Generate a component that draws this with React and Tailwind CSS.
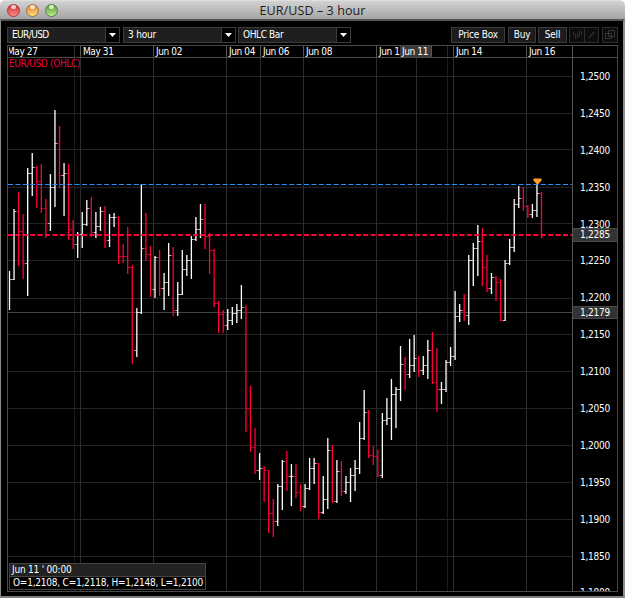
import React from 'react';

// [high, low, close] of every 3 hour bar, r = falling bar
const bars = [
  [271, 310, 279], [209, 280, 211], [192, 266, 231, 'r'], [214, 279, 263, 'r'], [168, 296, 173],
  [153, 196, 167], [166, 208, 181, 'r'], [164, 213, 208, 'r'], [199, 238, 223, 'r'], [174, 231, 187],
  [110, 207, 143], [126, 188, 175, 'r'], [163, 216, 173], [164, 240, 229, 'r'], [220, 249, 244, 'r'],
  [232, 258, 234], [212, 248, 224], [200, 226, 208], [197, 237, 232, 'r'], [212, 238, 226],
  [207, 231, 211], [206, 248, 240, 'r'], [214, 247, 217], [213, 227, 217], [216, 264, 256, 'r'],
  [244, 263, 256, 'r'], [227, 274, 267, 'r'], [265, 364, 350, 'r'], [308, 357, 312], [184, 314, 248],
  [213, 261, 254, 'r'], [246, 297, 289, 'r'], [256, 298, 257], [250, 296, 288, 'r'], [273, 310, 282],
  [243, 296, 255], [247, 316, 310, 'r'], [282, 316, 294], [250, 295, 269], [255, 276, 260],
  [236, 279, 239], [217, 241, 229], [204, 238, 219], [204, 249, 236, 'r'], [233, 274, 250, 'r'],
  [249, 307, 303, 'r'], [301, 333, 314, 'r'], [310, 333, 325, 'r'], [309, 330, 320], [307, 325, 313],
  [304, 323, 310], [285, 319, 307], [305, 432, 408, 'r'], [386, 452, 447, 'r'], [428, 474, 470, 'r'],
  [453, 480, 468], [466, 502, 470, 'r'], [470, 533, 513, 'r'], [499, 537, 521, 'r'], [484, 526, 486],
  [460, 510, 461], [451, 491, 476, 'r'], [464, 506, 476], [464, 498, 492, 'r'], [484, 511, 506, 'r'],
  [484, 508, 488], [458, 490, 468], [458, 484, 463], [463, 519, 512, 'r'], [476, 514, 499],
  [438, 509, 450], [445, 503, 501, 'r'], [460, 503, 471], [461, 496, 491, 'r'], [476, 494, 482],
  [468, 502, 475], [460, 491, 468], [422, 474, 438], [390, 440, 412], [410, 458, 455, 'r'],
  [446, 465, 456, 'r'], [450, 477, 475, 'r'], [413, 478, 420], [398, 425, 418], [379, 440, 394],
  [387, 428, 389], [346, 401, 364], [357, 390, 374, 'r'], [339, 378, 365], [335, 372, 358],
  [356, 377, 370, 'r'], [356, 375, 365], [340, 379, 350], [332, 384, 382, 'r'], [348, 412, 389, 'r'],
  [382, 404, 389], [360, 392, 362], [347, 366, 356], [291, 360, 316], [304, 322, 310],
  [294, 321, 315, 'r'], [255, 325, 260], [243, 286, 248], [225, 276, 241], [228, 286, 267, 'r'],
  [255, 292, 288, 'r'], [273, 294, 277], [276, 301, 282, 'r'], [279, 321, 320, 'r'], [260, 321, 263],
  [239, 265, 247], [199, 252, 204], [186, 208, 198], [187, 211, 206, 'r'], [205, 218, 214, 'r'],
  [204, 218, 210], [184, 217, 193], [192, 238, 237, 'r'],
];

const barX = (i) => 9.5 + i * 4.547;

const prices = [
  '1,2500', '1,2450', '1,2400', '1,2350', '1,2300', '1,2250', '1,2200', '1,2150',
  '1,2100', '1,2050', '1,2000', '1,1950', '1,1900', '1,1850', '1,1800',
];

const gridY = [76, 113, 149, 187, 223, 260, 298, 334, 371, 408, 445, 482, 519, 556];
const gridX = [80, 153, 226, 260, 303, 376, 416, 453, 526];

const dates = [
  { label: 'May 27', cell: 'w-[66px] border-transparent', text: '-ml-1' },
  { label: '', cell: 'w-[6px] border-[#2a2a2a]', text: '' },
  { label: 'May 31', cell: 'w-[73px] border-[#555]', text: '' },
  { label: 'Jun 02', cell: 'w-[73px] border-[#555]', text: '' },
  { label: 'Jun 04', cell: 'w-[34px] border-[#555]', text: '' },
  { label: 'Jun 06', cell: 'w-[43px] border-[#555]', text: '' },
  { label: 'Jun 08', cell: 'w-[73px] border-[#555]', text: '' },
  { label: 'Jun 1', cell: 'w-[71px] border-[#555]', text: '' },
  { label: '', cell: 'w-[6px] border-[#2a2a2a]', text: '' },
  { label: 'Jun 14', cell: 'w-[73px] border-[#555]', text: '' },
  { label: 'Jun 16', cell: 'w-[46px] border-[#555]', text: '' },
  { label: '', cell: 'w-[45px] border-[#555]', text: '' },
];

const Dropdown = ({ label, className }) => (
  <div className={`flex h-4 border border-[#3c3c3c] bg-[#1f1f1f] ${className}`}>
    <span className="flex-1 pl-1 leading-[14px]">{label}</span>
    <span className="w-[14px] border-l border-[#3c3c3c] bg-black flex items-center justify-center">
      <svg width="7" height="4" viewBox="0 0 7 4"><path d="M0 0h7L3.5 4z" fill="#fff" /></svg>
    </span>
  </div>
);

const Button = ({ children, className }) => (
  <button className={`h-4 border border-[#3c3c3c] bg-[#1c1c1c] leading-[14px] text-center whitespace-nowrap tracking-[-0.2px] ${className}`}>
    {children}
  </button>
);

const Light = ({ className }) => (
  <span className={`relative w-[13px] h-[13px] rounded-full border ${className}`}>
    <span className="absolute left-[3px] top-0 w-[5px] h-[4px] rounded-full bg-white/75" />
  </span>
);

const TitleBar = () => (
  <header className="relative h-[19px] shrink-0 flex items-center rounded-t-[5px] bg-linear-to-b from-[#d2d2d2] to-[#a5a5a5] border-t border-[#dedede] pl-[7px]">
    <div className="flex gap-[6px]">
      <Light className="border-[#a33a3c] bg-linear-to-b from-[#c9252b] to-[#ff8a86]" />
      <Light className="border-[#a9703a] bg-linear-to-b from-[#d97f20] to-[#ffdd80]" />
      <Light className="border-[#56803f] bg-linear-to-b from-[#559535] to-[#bdf090]" />
    </div>
    <h1 className="absolute inset-x-0 top-0 text-center text-[12.5px] leading-[19px] tracking-[0.1px] [font-stretch:normal] text-[#1c1c1c] font-['Open_Sans',sans-serif]">EUR/USD – 3 hour</h1>
  </header>
);

const Toolbar = () => (
  <div className="flex h-[18px] pl-[6px] pr-[5px] text-white">
    <Dropdown label="EUR/USD" className="w-[113px] tracking-[-0.6px]" />
    <Dropdown label="3 hour" className="w-[113px] ml-[3px] tracking-[-0.2px]" />
    <Dropdown label="OHLC Bar" className="w-[113px] ml-[2px]" />
    <div className="flex ml-auto">
      <Button className="w-[54px]">Price Box</Button>
      <Button className="w-[28px] ml-[3px]">Buy</Button>
      <Button className="w-[29px] ml-[2px]">Sell</Button>
      <div className="flex w-[30px] h-4 ml-[2px] border border-[#2f2f2f] bg-[#0d0d0d]">
        <svg width="14" height="14" viewBox="0 0 14 14" stroke="#2d2d2d" fill="none">
          <path d="M3.5 4v4M5.5 5v6M7.5 5v5M9.5 3v6M11.5 3v4" />
        </svg>
        <svg width="14" height="14" viewBox="0 0 14 14" stroke="#303030" fill="none" className="border-l border-[#2f2f2f]">
          <path d="M4 10l6-6" strokeWidth="1.5" />
        </svg>
      </div>
      <div className="w-4 h-4 ml-[3px] border border-[#2f2f2f] bg-[#0d0d0d]">
        <svg width="14" height="14" viewBox="0 0 14 14" stroke="#353535" fill="#0d0d0d">
          <path d="M5.5 2.5h6v6h-6zM2.5 5.5h6v5h-6z" />
        </svg>
      </div>
    </div>
  </div>
);

const DateAxis = () => (
  <div className="relative flex h-[11px] border-b border-[#4a4a4a] box-content text-white">
    {dates.map((d, i) => (
      <div key={i} className={`h-[11px] shrink-0 border-l overflow-hidden whitespace-nowrap pl-[2px] leading-[11px] ${d.cell}`}>
        <span className={d.text}>{d.label}</span>
      </div>
    ))}
    <span className="absolute left-[392px] top-0 h-[11px] w-[32px] pl-[2px] bg-[#3a3a3a] border-r border-[#555] leading-[11px]">Jun 11</span>
  </div>
);

const Chart = () => (
  <svg width="564" height="533" viewBox="8 58 564 533" className="block">
    {/* grid */}
    {gridY.map((y) => <rect key={y} x="8" y={y} width="564" height="1" fill="#242424" />)}
    {gridX.map((x) => <rect key={x} x={x} y="58" width="1" height="533" fill="#2c2c2c" />)}
    <path d="M74.5 58v533M447.5 58v533" stroke="#1c1c1c" />
    <path d="M8 312.5h564" stroke="#444" />
    {/* bars */}
    {bars.map(([high, low, close, dir], i) => (
      <g key={i} fill={dir ? '#ff0038' : '#fff'}>
        <rect x={barX(i) - 0.65} y={high} width="1.3" height={low - high} />
        <rect x={barX(i)} y={close} width="2.3" height="1" opacity="0.75" />
        {i > 0 && <rect x={barX(i) - 2.2} y={bars[i - 1][2]} width="2.2" height="1" opacity="0.75" />}
      </g>
    ))}
    {/* price levels */}
    <path d="M8 184.5h564" stroke="#1e90ff" strokeWidth="1.2" strokeDasharray="5 2.4" />
    <path d="M8 235h564" stroke="#ff0038" strokeWidth="2" strokeDasharray="5 2.4" />
    <path d="M533.5 178.5h8v2l-4 4.5-4-4.5z" fill="#ff9d2e" />
  </svg>
);

const PriceAxis = () => (
  <div className="relative w-[45px] h-[533px] overflow-hidden border-l border-[#555] text-white text-[10px] tracking-[-0.25px]">
    {prices.map((p) => (
      <div key={p} className="h-[36.9px] flex items-center pl-[7px]">{p}</div>
    ))}
    <div className="absolute left-0 right-0 top-[170px] h-[14px] pl-[7px] bg-[#333] border-y border-[#4a4a4a] leading-[12px]">1,2285</div>
    <div className="absolute left-0 right-0 top-[248px] h-[13px] pl-[7px] bg-[#333] border-y border-[#4a4a4a] leading-[12px]">1,2179</div>
  </div>
);

export default function App() {
  return (
    <div className="w-[625px] h-[598px] bg-white overflow-hidden flex flex-col text-[10px] tracking-[-0.4px] font-['DejaVu_Sans_Condensed','DejaVu_Sans',sans-serif] [font-stretch:condensed]">
      <TitleBar />
      <main className="flex-1 bg-black border-t-2 border-t-[#555] border-x border-x-[#8c8c8c] border-r-2 border-b-2 border-b-[#808080] pt-[6px]">
        <Toolbar />
        <section className="relative ml-[6px] w-[611px] h-[547px] border border-[#4a4a4a]">
          <DateAxis />
          <div className="flex">
            <Chart />
            <PriceAxis />
          </div>
          <span className="absolute left-[1px] top-[12px] leading-[12px] tracking-[-0.33px] text-[#f00038]">EUR/USD (OHLC)</span>
          <div className="absolute left-[1px] bottom-px w-[197px] h-[27px] border border-[#444] bg-black text-white whitespace-nowrap tracking-[-0.22px]">
            <div className="h-[13px] pl-[2px] bg-[#222] border-b border-[#444] leading-[12px]">Jun 11 ' 00:00</div>
            <div className="pl-[3px] leading-[12px]">O=1,2108, C=1,2118, H=1,2148, L=1,2100</div>
          </div>
        </section>
      </main>
    </div>
  );
}
